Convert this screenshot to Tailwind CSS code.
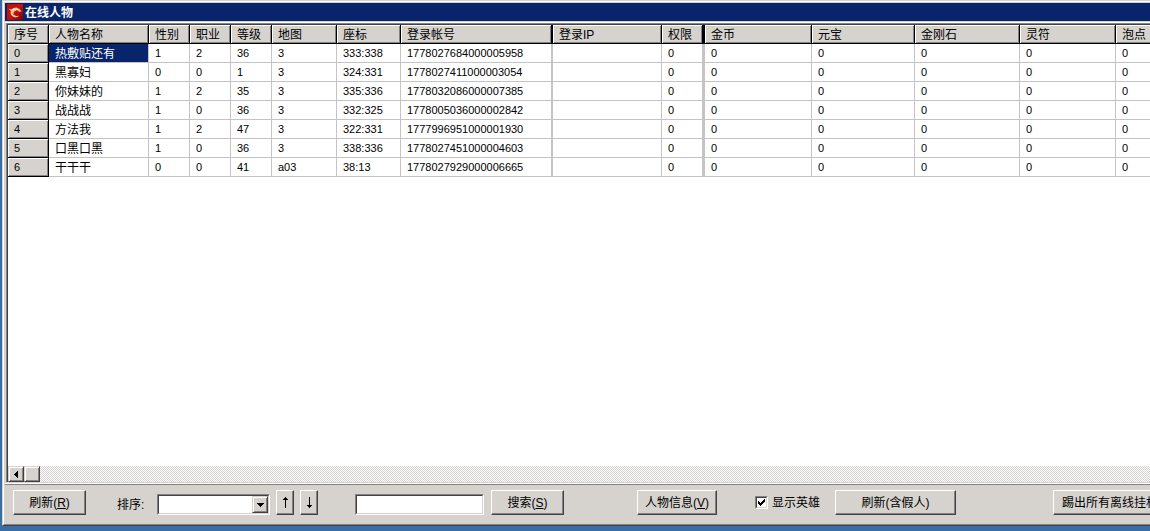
<!DOCTYPE html>
<html lang="zh-CN">
  <head>
    <meta charset="UTF-8" />
    <meta name="viewport" content="width=device-width, initial-scale=1.0" />
    <title>在线人物</title>
    <script src="https://cdn.jsdelivr.net/npm/@tailwindcss/browser@4"></script>
  </head>
  <body class="h-screen overflow-hidden bg-[#396da5] pb-[5px] pl-[2px] font-['Liberation_Sans','Noto_Sans_CJK_SC',sans-serif] text-xs text-black">
    <div class="h-full border-t border-b border-l border-[#d6d3ce] border-b-[#424142] bg-[#d6d3ce]">
      <div class="flex h-full flex-col border-t border-b border-l border-white border-b-[#848284] pt-px pl-px">
        <!-- Title bar -->
        <header class="flex h-[18px] shrink-0 items-center gap-[2px] bg-[#08246b] pl-[2px] text-white">
          <svg class="h-4 w-4" viewBox="0 0 16 16" aria-hidden="true">
            <defs>
              <linearGradient id="red" x1="0" y1="0" x2="1" y2="1">
                <stop offset="0" stop-color="#b81414" />
                <stop offset=".5" stop-color="#c81010" />
                <stop offset="1" stop-color="#7c0505" />
              </linearGradient>
            </defs>
            <rect width="16" height="16" rx="1" fill="url(#red)" />
            <path d="M1.500 4.500 4 5.500 6.500 4l3-.5 3 1.500 2 2.500-2.500.2L10.500 6.500 8 7 6.500 8.500l.3 2L9 12l3-.3L10.500 13 8 13.500 5 12 3.500 9.500 3.800 7z" fill="#f0c090" />
            <path d="M5.500 6 8 5l3 .5M4.800 8v2L7 12.300" fill="none" stroke="#fff0d8" stroke-width=".8" />
            <path d="M9 6.500 12 7.500M5.500 9.500 7 11.500" fill="none" stroke="#a8451c" stroke-width=".7" />
          </svg>
          <h1 class="pt-[2px] text-xs leading-4 font-bold">在线人物</h1>
        </header>

        <!-- Player grid -->
        <main class="mt-px flex min-h-0 flex-1 flex-col border-t border-b border-white">
          <div class="flex min-h-0 flex-1 flex-col border-b border-l border-[#d6d3ce]">
            <div class="flex min-h-0 flex-1 flex-col border-t border-l border-[#848284]">
              <div class="flex min-h-0 flex-1 flex-col border-t border-l border-[#424142] bg-white">
                <div class="min-h-0 flex-1 overflow-hidden">
                  <table class="w-full table-fixed border-separate border-spacing-0 text-left [&_td]:h-[19px] [&_td]:overflow-hidden [&_td]:border-r [&_td]:border-b [&_td]:border-[#c6c3c6] [&_td]:pl-[6px] [&_td]:text-[11px] [&_td]:leading-[18px] [&_td]:whitespace-nowrap [&_th]:h-[19px] [&_th]:overflow-hidden [&_th]:border-r [&_th]:border-b [&_th]:border-black [&_th]:bg-[#d6d3ce] [&_th]:pl-[6px] [&_th]:font-normal [&_th]:whitespace-nowrap [&_th]:shadow-[inset_1px_1px_0_#fff,inset_-1px_-1px_0_#848284] [&_td:last-child]:border-r-0 [&_th:last-child]:border-r-0 [&_th:last-child]:shadow-[inset_1px_1px_0_#fff,inset_0_-1px_0_#848284] [&_td:nth-child(2)]:pt-[2px] [&_td:nth-child(2)]:text-xs [&_td:nth-child(2)]:leading-4 [&_td:nth-child(8)]:border-r-2 [&_th:nth-child(8)]:border-r-2 [&_td:nth-child(10)]:border-r-3 [&_th:nth-child(10)]:border-r-3">
                    <colgroup>
                      <col class="w-[41px]" />
                      <col class="w-[100px]" />
                      <col class="w-[41px]" />
                      <col class="w-[41px]" />
                      <col class="w-[41px]" />
                      <col class="w-[65px]" />
                      <col class="w-[64px]" />
                      <col class="w-[152px]" />
                      <col class="w-[109px]" />
                      <col class="w-[43px]" />
                      <col class="w-[107px]" />
                      <col class="w-[103px]" />
                      <col class="w-[105px]" />
                      <col class="w-[96px]" />
                      <col />
                    </colgroup>
                    <thead class="[&_th]:pt-[2px] [&_th]:leading-4">
                      <tr>
                        <th>序号</th><th>人物名称</th><th>性别</th><th>职业</th><th>等级</th><th>地图</th><th>座标</th><th>登录帐号</th><th>登录IP</th><th>权限</th><th>金币</th><th>元宝</th><th>金刚石</th><th>灵符</th><th>泡点</th>
                      </tr>
                    </thead>
                    <tbody class="[&_th]:text-[11px] [&_th]:leading-[18px]">
                      <tr>
                        <th scope="row">0</th><td class="bg-[#08246b] text-white">热敷贴还有</td><td>1</td><td>2</td><td>36</td><td>3</td><td>333:338</td><td>1778027684000005958</td><td></td><td>0</td><td>0</td><td>0</td><td>0</td><td>0</td><td>0</td>
                      </tr>
                      <tr>
                        <th scope="row">1</th><td>黑寡妇</td><td>0</td><td>0</td><td>1</td><td>3</td><td>324:331</td><td>1778027411000003054</td><td></td><td>0</td><td>0</td><td>0</td><td>0</td><td>0</td><td>0</td>
                      </tr>
                      <tr>
                        <th scope="row">2</th><td>你妹妹的</td><td>1</td><td>2</td><td>35</td><td>3</td><td>335:336</td><td>1778032086000007385</td><td></td><td>0</td><td>0</td><td>0</td><td>0</td><td>0</td><td>0</td>
                      </tr>
                      <tr>
                        <th scope="row">3</th><td>战战战</td><td>1</td><td>0</td><td>36</td><td>3</td><td>332:325</td><td>1778005036000002842</td><td></td><td>0</td><td>0</td><td>0</td><td>0</td><td>0</td><td>0</td>
                      </tr>
                      <tr>
                        <th scope="row">4</th><td>方法我</td><td>1</td><td>2</td><td>47</td><td>3</td><td>322:331</td><td>1777996951000001930</td><td></td><td>0</td><td>0</td><td>0</td><td>0</td><td>0</td><td>0</td>
                      </tr>
                      <tr>
                        <th scope="row">5</th><td>口黑口黑</td><td>1</td><td>0</td><td>36</td><td>3</td><td>338:336</td><td>1778027451000004603</td><td></td><td>0</td><td>0</td><td>0</td><td>0</td><td>0</td><td>0</td>
                      </tr>
                      <tr>
                        <th scope="row">6</th><td>干干干</td><td>0</td><td>0</td><td>41</td><td>a03</td><td>38:13</td><td>1778027929000006665</td><td></td><td>0</td><td>0</td><td>0</td><td>0</td><td>0</td><td>0</td>
                      </tr>
                    </tbody>
                  </table>
                </div>

                <!-- Horizontal scrollbar -->
                <div class="flex h-4 shrink-0 bg-[#d6d3ce] bg-[conic-gradient(#fff_25%,#d6d3ce_0_50%,#fff_0_75%,#d6d3ce_0)] bg-[length:2px_2px]">
                  <button type="button" aria-label="向左滚动" class="flex h-4 w-4 items-center justify-center border border-[#d6d3ce] border-r-[#424142] border-b-[#424142] bg-[#d6d3ce] shadow-[inset_1px_1px_0_#fff,inset_-1px_-1px_0_#848284]">
                    <svg class="h-[7px] w-1" viewBox="0 0 4 7" shape-rendering="crispEdges"><path d="M3 0h1v7H3V6H2V5H1V4H0V3h1V2h1V1h1z" /></svg>
                  </button>
                  <div class="h-4 w-4 border border-[#d6d3ce] border-r-[#424142] border-b-[#424142] bg-[#d6d3ce] shadow-[inset_1px_1px_0_#fff,inset_-1px_-1px_0_#848284]"></div>
                </div>
              </div>
            </div>
          </div>
        </main>

        <!-- Toolbar -->
        <footer class="flex shrink-0 items-end overflow-hidden border-t border-[#848284] pt-[5px] pb-[9px] pl-2 whitespace-nowrap">
          <button type="button" class="h-[25px] w-[73px] shrink-0 border border-white border-r-[#424142] border-b-[#424142] shadow-[inset_-1px_-1px_0_#848284]">刷新(<u>R</u>)</button>
          <label for="sort" class="ml-[31px] w-10 shrink-0 leading-5">排序:</label>
          <div class="relative h-[21px] w-[113px] shrink-0 border border-[#848284] border-r-white border-b-white">
            <select id="sort" class="block h-full w-full appearance-none border border-[#424142] border-r-[#d6d3ce] border-b-[#d6d3ce] bg-white pr-4 pl-1 outline-none">
              <option></option>
              <option>等级</option>
              <option>职业</option>
            </select>
            <span class="pointer-events-none absolute top-px right-px bottom-px flex w-4 items-center justify-center border border-[#d6d3ce] border-r-[#424142] border-b-[#424142] bg-[#d6d3ce] shadow-[inset_1px_1px_0_#fff,inset_-1px_-1px_0_#848284]">
              <svg class="h-1 w-[7px]" viewBox="0 0 7 4" shape-rendering="crispEdges"><path d="M0 0h7v1H6v1H5v1H4v1H3V3H2V2H1V1H0z" /></svg>
            </span>
          </div>
          <button type="button" aria-label="升序" class="ml-[6px] flex h-[25px] w-[18px] shrink-0 items-center justify-center border border-white border-r-[#424142] border-b-[#424142] shadow-[inset_-1px_-1px_0_#848284]">
            <svg class="h-[11px] w-[5px]" viewBox="0 0 5 11" shape-rendering="crispEdges"><path d="M2 0h1v11H2zM1 1h3v1H1zM0 2h5v1H0z" /></svg>
          </button>
          <button type="button" aria-label="降序" class="ml-[6px] flex h-[25px] w-[18px] shrink-0 items-center justify-center border border-white border-r-[#424142] border-b-[#424142] shadow-[inset_-1px_-1px_0_#848284]">
            <svg class="h-[11px] w-[5px]" viewBox="0 0 5 11" shape-rendering="crispEdges"><path d="M2 0h1v11H2zM0 8h5v1H0zM1 9h3v1H1z" /></svg>
          </button>
          <div class="ml-[37px] h-[21px] w-[129px] shrink-0 border border-[#848284] border-r-white border-b-white">
            <input type="text" aria-label="搜索" class="block h-full w-full border border-[#424142] border-r-[#d6d3ce] border-b-[#d6d3ce] bg-white px-1 outline-none" />
          </div>
          <button type="button" class="ml-[7px] h-[25px] w-[73px] shrink-0 border border-white border-r-[#424142] border-b-[#424142] shadow-[inset_-1px_-1px_0_#848284]">搜索(<u>S</u>)</button>
          <button type="button" class="ml-[73px] h-[25px] w-20 shrink-0 border border-white border-r-[#424142] border-b-[#424142] shadow-[inset_-1px_-1px_0_#848284]">人物信息(<u>V</u>)</button>
          <label class="ml-[38px] flex h-[25px] w-20 shrink-0 items-center gap-1">
            <span class="relative h-[13px] w-[13px] border border-[#848284] border-r-white border-b-white">
              <input type="checkbox" checked class="peer block h-full w-full appearance-none border border-[#424142] border-r-[#d6d3ce] border-b-[#d6d3ce] bg-white" />
              <svg class="pointer-events-none absolute top-[2px] left-[2px] hidden h-[7px] w-[7px] peer-checked:block" viewBox="0 0 7 7" shape-rendering="crispEdges"><path d="M0 2h1v1h1v1h1V3h1V2h1V1h1V0h1v3H6v1H5v1H4v1H3v1H2V6H1V5H0z" /></svg>
            </span>
            显示英雄
          </label>
          <button type="button" class="h-[25px] w-[121px] shrink-0 border border-white border-r-[#424142] border-b-[#424142] shadow-[inset_-1px_-1px_0_#848284]">刷新(含假人)</button>
          <button type="button" class="ml-[97px] h-[25px] shrink-0 border border-white border-r-[#424142] border-b-[#424142] px-2 shadow-[inset_-1px_-1px_0_#848284]">踢出所有离线挂机</button>
        </footer>
      </div>
    </div>
  </body>
</html>
